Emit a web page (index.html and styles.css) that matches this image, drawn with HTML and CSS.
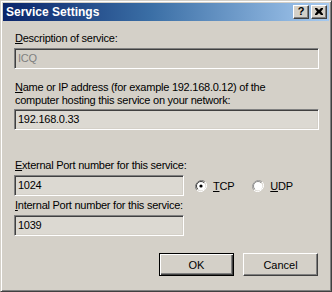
FILE: index.html
```html
<!DOCTYPE html>
<html lang="en">
<head>
    <meta charset="UTF-8">
    <title>Service Settings</title>
    <link rel="stylesheet" href="styles.css">
</head>
<body>
    <div class="window">
        <div class="title-bar">
            <span class="title-text">Service Settings</span>
            <div class="title-buttons">
                <span class="title-btn">?</span>
                <span class="title-btn">
                    <svg width="8" height="7" viewBox="0 0 8 7"><path d="M0 0h2l2 2 2-2h2v1l-2 2.5 2 2.5v1h-2l-2-2-2 2h-2v-1l2-2.5-2-2.5z" fill="#000"/></svg>
                </span>
            </div>
        </div>

        <div class="dialog-body">
            <label class="field-label first"><u>D</u>escription of service:</label>
            <div class="text-box wide disabled">ICQ</div>

            <label class="field-label second"><u>N</u>ame or IP address (for example 192.168.0.12) of the<br>computer hosting this service on your network:</label>
            <div class="text-box wide">192.168.0.33</div>

            <label class="field-label third"><u>E</u>xternal Port number for this service:</label>
            <div class="port-row">
                <div class="text-box narrow">1024</div>
                <div class="radio-group">
                    <span class="radio">
                        <svg width="12" height="12" viewBox="0 0 12 12">
                            <path d="M10.2 1.8A6 6 0 0 0 1.8 10.2" fill="none" stroke="#808080" stroke-width="1"/>
                            <path d="M1.8 10.2A6 6 0 0 0 10.2 1.8" fill="none" stroke="#ffffff" stroke-width="1"/>
                            <circle cx="6" cy="6" r="4.5" fill="#fff"/>
                            <path d="M9.2 2.8A4.5 4.5 0 0 0 2.8 9.2" fill="none" stroke="#404040" stroke-width="1"/>
                            <circle cx="6" cy="6" r="1.6" fill="#000"/>
                        </svg>
                        <span><u>T</u>CP</span>
                    </span>
                    <span class="radio">
                        <svg width="12" height="12" viewBox="0 0 12 12">
                            <path d="M10.2 1.8A6 6 0 0 0 1.8 10.2" fill="none" stroke="#a0a0a0" stroke-width="1"/>
                            <path d="M1.8 10.2A6 6 0 0 0 10.2 1.8" fill="none" stroke="#ffffff" stroke-width="1"/>
                            <circle cx="6" cy="6" r="4.5" fill="#fff"/>
                            <path d="M9.2 2.8A4.5 4.5 0 0 0 2.8 9.2" fill="none" stroke="#909090" stroke-width="1"/>
                        </svg>
                        <span><u>U</u>DP</span>
                    </span>
                </div>
            </div>

            <label class="field-label fourth"><u>I</u>nternal Port number for this service:</label>
            <div class="text-box narrow">1039</div>

            <div class="button-row">
                <button class="push-btn default">OK</button>
                <button class="push-btn">Cancel</button>
            </div>
        </div>
    </div>
</body>
</html>
```

FILE: styles.css
```css
* {
    box-sizing: border-box;
}

body {
    margin: 0;
    background: #d4d0c8;
    font-family: Tahoma, 'Liberation Sans', Arial, sans-serif;
    font-size: 11px;
    letter-spacing: -0.25px;
    color: #000;
}

.window {
    width: 332px;
    height: 292px;
    background: #d4d0c8;
    border-top: 1px solid #d4d0c8;
    border-left: 1px solid #d4d0c8;
    border-right: 1px solid #404040;
    border-bottom: 1px solid #404040;
    box-shadow: inset 1px 1px 0 #ffffff, inset -1px -1px 0 #808080;
    padding: 2px;
    display: flex;
    flex-direction: column;
}

.title-bar {
    height: 18px;
    background: linear-gradient(90deg, #0a246a 0%, #3a6ea5 45%, #a6caf0 100%);
    display: flex;
    align-items: center;
    justify-content: space-between;
    padding: 0 2px 0 3px;
}

.title-text {
    color: #fff;
    font-weight: 700;
    font-size: 12px;
    letter-spacing: 0;
}

.title-buttons {
    display: flex;
    gap: 2px;
}

.title-btn {
    width: 16px;
    height: 14px;
    background: #d4d0c8;
    border-top: 1px solid #ffffff;
    border-left: 1px solid #ffffff;
    border-right: 1px solid #404040;
    border-bottom: 1px solid #404040;
    box-shadow: inset -1px -1px 0 #808080;
    display: flex;
    align-items: center;
    justify-content: center;
    font-weight: 700;
    font-size: 11px;
    line-height: 1;
    padding-bottom: 1px;
}

.dialog-body {
    display: flex;
    flex-direction: column;
    align-items: flex-start;
    padding: 0 11px 0 11px;
}

.field-label {
    display: block;
    line-height: 13px;
    padding-left: 1px;
}

.field-label.first {
    margin-top: 11px;
    margin-bottom: 3px;
}

.field-label.second {
    margin-top: 12px;
    margin-bottom: 2px;
}

.field-label.third {
    margin-top: 29px;
    margin-bottom: 3px;
}

.field-label.fourth {
    margin-top: 3px;
    margin-bottom: 3px;
}

.text-box {
    height: 21px;
    background: #dcd9d2;
    border-top: 1px solid #808080;
    border-left: 1px solid #808080;
    border-right: 1px solid #ffffff;
    border-bottom: 1px solid #ffffff;
    box-shadow: inset 1px 1px 0 #404040, inset -1px -1px 0 #d4d0c8;
    padding: 3px 0 0 3px;
    line-height: 13px;
}

.text-box.wide {
    width: 305px;
}

.text-box.narrow {
    width: 170px;
}

.text-box.disabled {
    background: #d4d0c8;
    color: #808080;
}

.port-row {
    display: flex;
    align-items: center;
}

.radio-group {
    display: flex;
    gap: 18px;
    margin-left: 11px;
}

.radio {
    display: flex;
    align-items: center;
    gap: 6px;
}

.radio svg {
    display: block;
}

.button-row {
    align-self: flex-end;
    display: flex;
    gap: 9px;
    margin-top: 17px;
    margin-right: 0;
}

.push-btn {
    width: 75px;
    height: 23px;
    background: #d4d0c8;
    font-family: Tahoma, 'Liberation Sans', Arial, sans-serif;
    font-size: 11px;
    color: #000;
    border-top: 1px solid #ffffff;
    border-left: 1px solid #ffffff;
    border-right: 1px solid #404040;
    border-bottom: 1px solid #404040;
    box-shadow: inset -1px -1px 0 #808080;
    padding: 0;
}

.push-btn.default {
    border: 1px solid #000;
    box-shadow: inset 1px 1px 0 #ffffff, inset -1px -1px 0 #404040, inset -2px -2px 0 #808080;
}
```
